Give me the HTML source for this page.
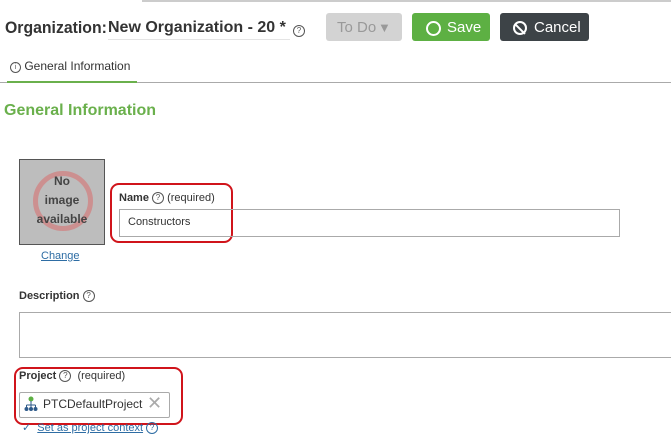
<!DOCTYPE html>
<html><head><style>
body{margin:0;width:671px;height:439px;overflow:hidden;background:#fff;font-family:"Liberation Sans",sans-serif;color:#333;position:relative}
.a{position:absolute;white-space:nowrap}
.q{display:inline-block;width:10px;height:10px;border:1px solid #555;border-radius:50%;font-size:8px;line-height:10px;text-align:center;color:#555;vertical-align:1px}
.btn{position:absolute;top:13px;height:28px;border-radius:3px;font-size:15px;line-height:30px;color:#fff;white-space:nowrap}
</style></head><body>
<div class="a" style="left:142px;top:0;width:529px;height:2px;background:#ccc"></div>
<div class="a" style="left:5px;top:18px;font-size:17px;font-weight:bold;color:#333;transform:scaleX(.93);transform-origin:0 0">Organization:</div>
<div class="a" style="left:108px;top:19px;font-size:16px;font-weight:bold;color:#333">New Organization - 20 *</div>
<div class="a" style="left:108px;top:39px;width:182px;height:1px;background:#e4e4e4"></div>
<div class="a" style="left:293px;top:21px"><span class="q">?</span></div>
<div class="btn" style="left:326px;width:76px;background:#d3d3d3;color:#999"><span class="a" style="left:11px">To Do</span><span class="a" style="left:52px;font-size:13px">▼</span></div>
<div class="btn" style="left:412px;width:78px;background:#5db043"><span class="a" style="left:14px;top:8px;width:11px;height:11px;border:2px solid #fff;border-radius:50%"></span><span class="a" style="left:35px">Save</span></div>
<div class="btn" style="left:500px;width:89px;background:#3d4347"><span class="a" style="left:13px;top:8px;width:10px;height:10px;border:2px solid #fff;border-radius:50%"></span><span class="a" style="left:19px;top:9px;width:2px;height:14px;background:#fff;transform:rotate(-45deg)"></span><span class="a" style="left:34px">Cancel</span></div>
<div class="a" style="left:10px;top:59px;font-size:12px;color:#333"><span class="q" style="width:9px;height:9px;font-size:7px;line-height:9px">i</span> General Information</div>
<div class="a" style="left:0;top:82px;width:671px;height:1px;background:#aaa"></div>
<div class="a" style="left:7px;top:81px;width:130px;height:2px;background:#6ab04c"></div>
<div class="a" style="left:4px;top:102px;font-size:16px;font-weight:bold;color:#6ab04c">General Information</div>
<div class="a" style="left:19px;top:159px;width:84px;height:84px;background:#bdbdbd;border:1px solid #555"></div>
<div class="a" style="left:33px;top:171px;width:50px;height:50px;border:5px solid rgba(220,100,100,.5);border-radius:50%"></div>
<div class="a" style="left:19px;top:172px;width:86px;text-align:center;font-size:12px;font-weight:bold;color:#444;line-height:19px">No<br>image<br>available</div>
<div class="a" style="left:41px;top:250px;font-size:11px;color:#2e6da4;text-decoration:underline">Change</div>
<div class="a" style="left:110px;top:183px;width:119px;height:56px;border:2px solid #d0141b;border-radius:9px"></div>
<div class="a" style="left:119px;top:192px;font-size:11px"><b>Name</b> <span class="q">?</span> (required)</div>
<div class="a" style="left:119px;top:209px;width:499px;height:26px;border:1px solid #aaa"></div>
<div class="a" style="left:128px;top:216px;font-size:11px">Constructors</div>
<div class="a" style="left:19px;top:290px;font-size:11px"><b>Description</b> <span class="q">?</span></div>
<div class="a" style="left:19px;top:312px;width:660px;height:44px;border:1px solid #aaa"></div>
<div class="a" style="left:14px;top:367px;width:165px;height:54px;border:2px solid #d0141b;border-radius:9px"></div>
<div class="a" style="left:19px;top:370px;font-size:11px"><b>Project</b> <span class="q">?</span> &nbsp;(required)</div>
<div class="a" style="left:19px;top:392px;width:149px;height:24px;border:1px solid #aaa;border-radius:2px"></div>
<svg class="a" style="left:24px;top:396px" width="14" height="16"><circle cx="7" cy="3" r="2.5" fill="#5db043"/><path d="M7 5v4M2.5 9h9M2.5 9v3M7 9v3M11.5 9v3" stroke="#2e5a8a" fill="none"/><circle cx="2.5" cy="13" r="2" fill="#2e5a8a"/><circle cx="7" cy="13" r="2" fill="#2e5a8a"/><circle cx="11.5" cy="13" r="2" fill="#2e5a8a"/></svg>
<div class="a" style="left:43px;top:397px;font-size:12px">PTCDefaultProject</div>
<div class="a" style="left:147px;top:393px;font-size:18px;color:#aaa">✕</div>
<div class="a" style="left:22px;top:421px;font-size:11px;color:#2e6da4">✓ <span style="text-decoration:underline;margin-left:3px">Set as project context</span> <span class="q" style="border-color:#2e6da4;color:#2e6da4">?</span></div>
</body></html>
